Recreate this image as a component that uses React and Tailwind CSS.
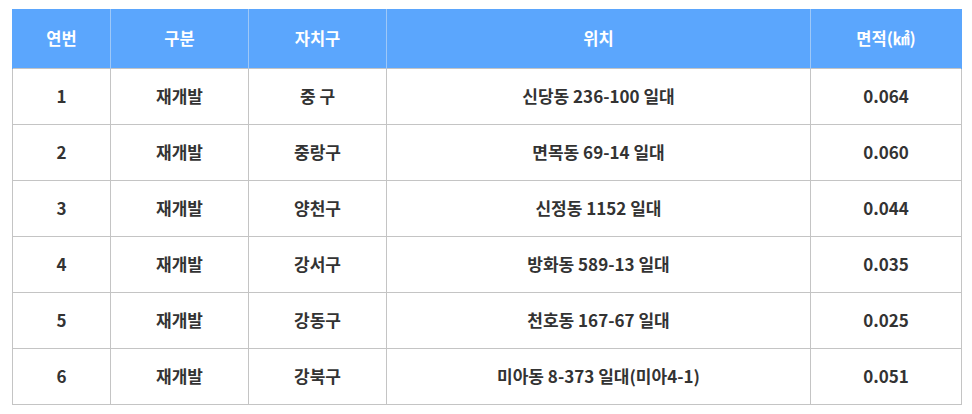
const rows = [
  ["1", "재개발", "중 구", "신당동 236-100 일대", "0.064"],
  ["2", "재개발", "중랑구", "면목동 69-14 일대", "0.060"],
  ["3", "재개발", "양천구", "신정동 1152 일대", "0.044"],
  ["4", "재개발", "강서구", "방화동 589-13 일대", "0.035"],
  ["5", "재개발", "강동구", "천호동 167-67 일대", "0.025"],
  ["6", "재개발", "강북구", "미아동 8-373 일대(미아4-1)", "0.051"],
];

const headers = ["연번", "구분", "자치구", "위치", "면적(㎢)"];
const widths = ["w-[98px]", "w-[138px]", "w-[138px]", "w-[424px]", "w-[151px]"];

export default function App() {
  return (
    <div className="bg-white w-[972px] h-[414px] pt-[9px] pl-[12px] font-['Noto_Sans_CJK_KR','Noto_Sans',sans-serif]">
      <table className="w-[949px] border-collapse table-fixed">
        <thead>
          <tr className="h-[59px] bg-[#5ba6fd]">
            {headers.map((h, i) => (
              <th
                key={h}
                className={`${widths[i]} text-white text-[16.5px] font-bold border-x border-[#9ec8f8] first:border-l-[#5ba6fd] last:border-r-[#5ba6fd] p-0`}
              >
                {h}
              </th>
            ))}
          </tr>
        </thead>
        <tbody>
          {rows.map((r) => (
            <tr key={r[0]} className="h-[56px]">
              {r.map((c, i) => (
                <td
                  key={i}
                  className="border border-[#c4c4c4] text-center text-[17px] font-bold text-[#333333] p-0"
                >
                  {c}
                </td>
              ))}
            </tr>
          ))}
        </tbody>
      </table>
    </div>
  );
}
